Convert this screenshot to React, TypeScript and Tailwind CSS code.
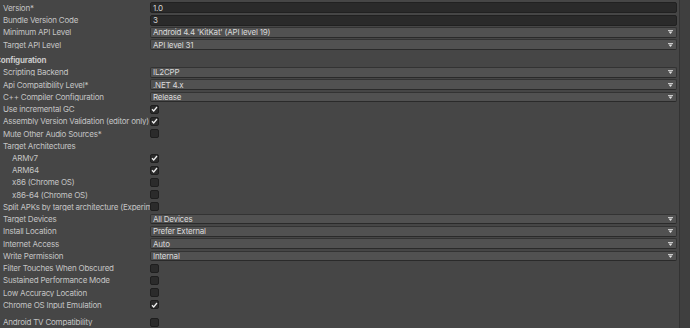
import React from "react";

const font = { fontFamily: "Inter, 'Noto Sans', sans-serif" };

function Arrow() {
  return (
    <svg width="5" height="4" viewBox="0 0 5 4" className="shrink-0">
      <rect x="0" y="0" width="5" height="1" fill="#c8c8c8" />
      <path d="M0.5 1.5 L4.5 1.5 L2.5 4 Z" fill="#e0e0e0" />
    </svg>
  );
}

function Check({ on }: { on?: boolean }) {
  return (
    <div className="flex h-[9px] w-[9px] items-center justify-center rounded-[2px] border border-[#1e1e1e] bg-[#2b2b2b]">
      {on && (
        <svg width="7" height="6" viewBox="0 0 7 6">
          <path d="M1 3.3 L2.7 5 L6 1" stroke="#eeeeee" strokeWidth="1.3" fill="none" />
        </svg>
      )}
    </div>
  );
}

function TextField({ v }: { v: string }) {
  return (
    <div className="flex h-[11px] items-center rounded-[2px] border border-[#212121] bg-[#2a2a2a] pl-[2px] text-[#d4d4d4]">
      {v}
    </div>
  );
}

function Drop({ v }: { v: string }) {
  return (
    <div className="flex h-[10.5px] items-center justify-between rounded-[2px] border border-[#333333] border-b-[#2a2a2a] bg-[#515151] pl-[2px] pr-[3px] text-[#dadada]">
      <span>{v}</span>
      <Arrow />
    </div>
  );
}

function Row({
  label,
  indent,
  children,
}: {
  label: string;
  indent?: boolean;
  children?: React.ReactNode;
}) {
  return (
    <div className="flex h-[12.3px] items-center">
      <div
        className={
          "w-[150px] shrink-0 overflow-hidden whitespace-nowrap text-[#c4c4c4] " +
          (indent ? "pl-[12px]" : "pl-[3px]")
        }
      >
        {label}
      </div>
      <div className="min-w-0 flex-1">{children}</div>
    </div>
  );
}

export default function App() {
  return (
    <div
      className="flex h-[328px] w-[690px] overflow-hidden bg-[#464646] text-[8px] leading-none tracking-[-0.22px]"
      style={font}
    >
      <div className="flex w-[677px] flex-col pt-[1.8px]">
        <Row label="Version*">
          <TextField v="1.0" />
        </Row>
        <Row label="Bundle Version Code">
          <TextField v="3" />
        </Row>
        <Row label="Minimum API Level">
          <Drop v="Android 4.4 'KitKat' (API level 19)" />
        </Row>
        <Row label="Target API Level">
          <Drop v="API level 31" />
        </Row>
        <div className="h-[3.3px]" />
        <div className="flex h-[12.3px] items-center whitespace-nowrap font-bold text-[#c8c8c8]">
          <span className="ml-[-5px]">Configuration</span>
        </div>
        <Row label="Scripting Backend">
          <Drop v="IL2CPP" />
        </Row>
        <Row label="Api Compatibility Level*">
          <Drop v=".NET 4.x" />
        </Row>
        <Row label="C++ Compiler Configuration">
          <Drop v="Release" />
        </Row>
        <Row label="Use incremental GC">
          <Check on />
        </Row>
        <Row label="Assembly Version Validation (editor only)">
          <Check on />
        </Row>
        <Row label="Mute Other Audio Sources*">
          <Check />
        </Row>
        <Row label="Target Architectures" />
        <Row label="ARMv7" indent>
          <Check on />
        </Row>
        <Row label="ARM64" indent>
          <Check on />
        </Row>
        <Row label="x86 (Chrome OS)" indent>
          <Check />
        </Row>
        <Row label="x86-64 (Chrome OS)" indent>
          <Check />
        </Row>
        <Row label="Split APKs by target architecture (Experimental)">
          <Check />
        </Row>
        <Row label="Target Devices">
          <Drop v="All Devices" />
        </Row>
        <Row label="Install Location">
          <Drop v="Prefer External" />
        </Row>
        <Row label="Internet Access">
          <Drop v="Auto" />
        </Row>
        <Row label="Write Permission">
          <Drop v="Internal" />
        </Row>
        <Row label="Filter Touches When Obscured">
          <Check />
        </Row>
        <Row label="Sustained Performance Mode">
          <Check />
        </Row>
        <Row label="Low Accuracy Location">
          <Check />
        </Row>
        <Row label="Chrome OS Input Emulation">
          <Check on />
        </Row>
        <div className="h-[5px]" />
        <Row label="Android TV Compatibility">
          <Check />
        </Row>
      </div>
      <div className="w-[2px]" />
      <div className="w-[11px] border-l border-[#333333] bg-[#3f3f3f]" />
    </div>
  );
}
